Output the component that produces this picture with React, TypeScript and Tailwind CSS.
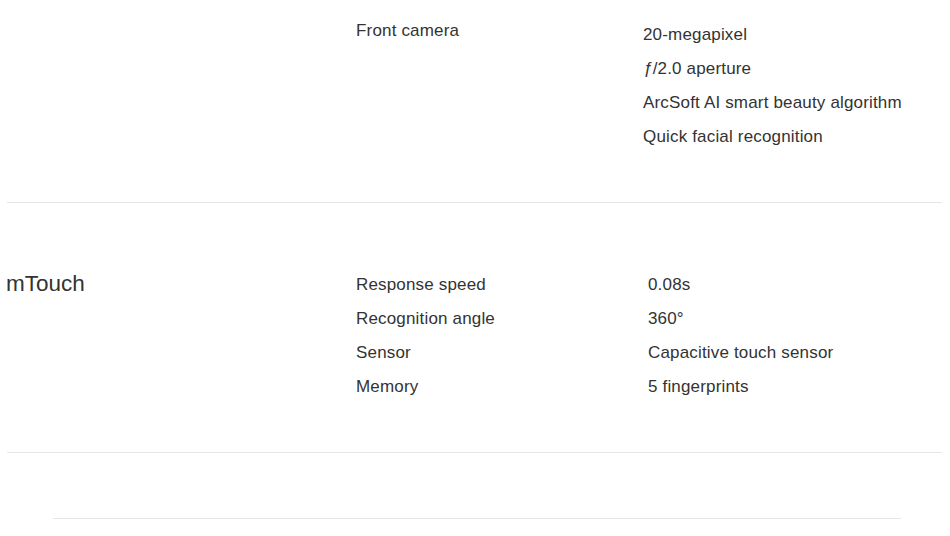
const frontCamera = ["20-megapixel", "ƒ/2.0 aperture", "ArcSoft AI smart beauty algorithm", "Quick facial recognition"];

const mTouch = [
  ["Response speed", "0.08s"],
  ["Recognition angle", "360°"],
  ["Sensor", "Capacitive touch sensor"],
  ["Memory", "5 fingerprints"],
];

export default function App() {
  return (
    <main className="bg-white w-[950px] h-[536px] overflow-hidden text-[#333] font-['Liberation_Sans',Arial,sans-serif]">
      <div className="ml-[7px] w-[935px]">
        <section className="flex h-[203px] border-b border-[#e6e6e6] text-[17px] leading-[34px] tracking-[0.01em]">
          <div className="w-[349px]" />
          <div className="w-[287px] pt-[14px]">Front camera</div>
          <ul className="pt-[18px]">
            {frontCamera.map((v) => (
              <li key={v}>{v.startsWith("ƒ") ? <><span className="italic">ƒ</span>{v.slice(1)}</> : v}</li>
            ))}
          </ul>
        </section>

        <section className="flex h-[250px] border-b border-[#e6e6e6] pt-[65px]">
          <h2 className="w-[350px] -ml-px -mt-px text-[22.5px] leading-[34px]">mTouch</h2>
          <div className="flex flex-col text-[17px] leading-[34px] tracking-[0.01em]">
            {mTouch.map(([k, v]) => (
              <div key={k} className="flex">
                <span className="w-[292px]">{k}</span>
                <span>{v}</span>
              </div>
            ))}
          </div>
        </section>
      </div>

      <div className="ml-[53px] w-[848px] mt-[65px] border-t border-[#e6e6e6]" />
    </main>
  );
}
